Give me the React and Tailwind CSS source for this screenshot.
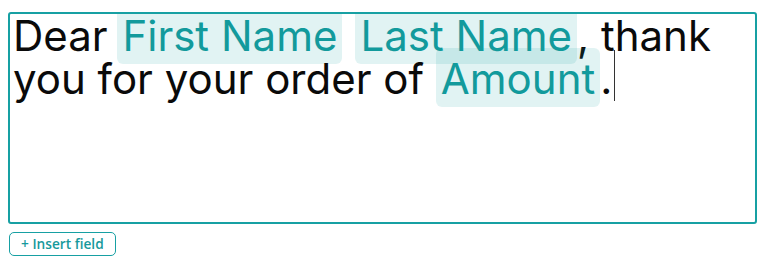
export default function App() {
  const chip =
    'rounded-md bg-[rgba(20,160,160,0.13)] px-[5px] pt-[5px] pb-[3px] text-[#129a9c]';

  return (
    <div className="bg-white pl-2 pr-[11px] pt-3" style={{ fontFamily: 'Inter, "Noto Sans", sans-serif' }}>
      <div className="h-[212px] overflow-hidden rounded-[3px] border-2 border-[#17a0a3] px-[3px]">
        <p className="text-[42px] leading-[43px] text-[#0a0a0a]">
          Dear <span className={`${chip} -ml-[2px]`}>First Name</span>
          <span className={`${chip} ml-[13px]`}>Last Name</span>, thank you for your order of{' '}
          <span className={chip}>Amount</span>.
          <span className="relative">
            <span className="absolute left-[2px] top-[-3px] h-[51px] w-px bg-[#333]" />
          </span>
        </p>
      </div>
      <div className="mt-2 flex pl-px">
        <button
          type="button"
          className="flex h-6 items-center rounded-[5px] border border-[#17a0a3] px-[11px] text-[13.7px] font-semibold text-[#17999c]"
          style={{ fontFamily: '"Open Sans", "Noto Sans", sans-serif' }}
        >
          + Insert field
        </button>
      </div>
    </div>
  );
}
